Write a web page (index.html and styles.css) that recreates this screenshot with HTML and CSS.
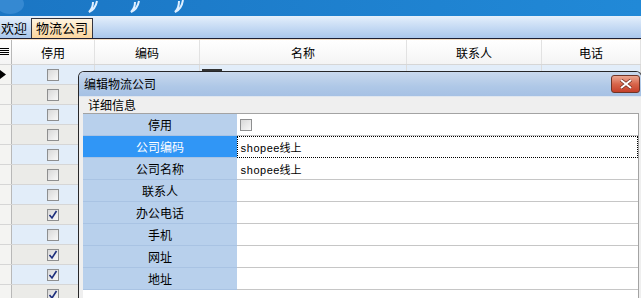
FILE: index.html
```html
<!DOCTYPE html>
<html lang="zh-CN">
<head>
    <meta charset="UTF-8">
    <title>物流公司</title>
    <link rel="stylesheet" href="styles.css">
</head>
<body>
    <!-- Banner -->
    <div class="banner">
        <svg class="banner-art" width="641" height="16" viewBox="0 0 641 16">
            <ellipse cx="10" cy="4" rx="14" ry="10" fill="#4f9be0" opacity="0.5"/>
            <path d="M97 1 C96 6 94 10 89 12 C92 9 93 6 93 2" fill="none" stroke="#dfefff" stroke-width="2"/>
            <path d="M139 1 C138 6 136 10 131 12 C134 9 135 6 135 2" fill="none" stroke="#dfefff" stroke-width="2"/>
            <path d="M183 0 C182 6 180 10 175 12 C178 9 179 6 179 1" fill="none" stroke="#dfefff" stroke-width="2"/>
        </svg>
    </div>

    <!-- Tabs -->
    <div class="tabs">
        <span class="tab">欢迎</span>
        <span class="tab active">物流公司</span>
    </div>

    <!-- Grid -->
    <div class="grid">
        <div class="grid-row grid-head">
            <div class="cell rh">
                <svg width="9" height="8" viewBox="0 0 9 8"><rect y="0" width="9" height="1"/><rect y="2" width="9" height="1"/><rect y="4" width="9" height="1"/><rect y="6" width="9" height="1"/></svg>
            </div>
            <div class="cell">停用</div>
            <div class="cell">编码</div>
            <div class="cell">名称</div>
            <div class="cell">联系人</div>
            <div class="cell">电话</div>
        </div>

        <div class="grid-row even">
            <div class="cell rh"><svg width="6" height="9" viewBox="0 0 6 9"><path d="M0 0 L6 4.5 L0 9 Z"/></svg></div>
            <div class="cell"><span class="chk"></span></div>
            <div class="cell"></div>
            <div class="cell left"><span class="cut"></span></div>
            <div class="cell"></div>
            <div class="cell"></div>
        </div>
        <div class="grid-row odd">
            <div class="cell rh"></div><div class="cell"><span class="chk"></span></div>
            <div class="cell"></div><div class="cell"></div><div class="cell"></div><div class="cell"></div>
        </div>
        <div class="grid-row even">
            <div class="cell rh"></div><div class="cell"><span class="chk"></span></div>
            <div class="cell"></div><div class="cell"></div><div class="cell"></div><div class="cell"></div>
        </div>
        <div class="grid-row odd">
            <div class="cell rh"></div><div class="cell"><span class="chk"></span></div>
            <div class="cell"></div><div class="cell"></div><div class="cell"></div><div class="cell"></div>
        </div>
        <div class="grid-row even">
            <div class="cell rh"></div><div class="cell"><span class="chk"></span></div>
            <div class="cell"></div><div class="cell"></div><div class="cell"></div><div class="cell"></div>
        </div>
        <div class="grid-row odd">
            <div class="cell rh"></div><div class="cell"><span class="chk"></span></div>
            <div class="cell"></div><div class="cell"></div><div class="cell"></div><div class="cell"></div>
        </div>
        <div class="grid-row even">
            <div class="cell rh"></div><div class="cell"><span class="chk"></span></div>
            <div class="cell"></div><div class="cell"></div><div class="cell"></div><div class="cell"></div>
        </div>
        <div class="grid-row odd">
            <div class="cell rh"></div><div class="cell"><span class="chk"><svg width="10" height="10" viewBox="0 0 10 10"><path d="M1.5 5 L4 8 L8.5 1"/></svg></span></div>
            <div class="cell"></div><div class="cell"></div><div class="cell"></div><div class="cell"></div>
        </div>
        <div class="grid-row even">
            <div class="cell rh"></div><div class="cell"><span class="chk"></span></div>
            <div class="cell"></div><div class="cell"></div><div class="cell"></div><div class="cell"></div>
        </div>
        <div class="grid-row odd">
            <div class="cell rh"></div><div class="cell"><span class="chk"><svg width="10" height="10" viewBox="0 0 10 10"><path d="M1.5 5 L4 8 L8.5 1"/></svg></span></div>
            <div class="cell"></div><div class="cell"></div><div class="cell"></div><div class="cell"></div>
        </div>
        <div class="grid-row even">
            <div class="cell rh"></div><div class="cell"><span class="chk"><svg width="10" height="10" viewBox="0 0 10 10"><path d="M1.5 5 L4 8 L8.5 1"/></svg></span></div>
            <div class="cell"></div><div class="cell"></div><div class="cell"></div><div class="cell"></div>
        </div>
        <div class="grid-row odd">
            <div class="cell rh"></div><div class="cell"><span class="chk"><svg width="10" height="10" viewBox="0 0 10 10"><path d="M1.5 5 L4 8 L8.5 1"/></svg></span></div>
            <div class="cell"></div><div class="cell"></div><div class="cell"></div><div class="cell"></div>
        </div>
    </div>

    <!-- Edit dialog -->
    <div class="dialog">
        <div class="dialog-title">
            <span>编辑物流公司</span>
            <span class="close">
                <svg width="14" height="10" viewBox="0 0 14 10"><path d="M2 1 L12 9 M12 1 L2 9" stroke="#6b2a1c" stroke-width="3.4"/><path d="M2 1 L12 9 M12 1 L2 9" stroke="#fff" stroke-width="2"/></svg>
            </span>
        </div>
        <div class="dialog-sub">详细信息</div>
        <div class="group">
            <div class="prop">
                <div class="prop-label">停用</div>
                <div class="prop-value"><span class="chk"></span></div>
            </div>
            <div class="prop selected">
                <div class="prop-label">公司编码</div>
                <div class="prop-value focus">shopee线上</div>
            </div>
            <div class="prop">
                <div class="prop-label">公司名称</div>
                <div class="prop-value">shopee线上</div>
            </div>
            <div class="prop">
                <div class="prop-label">联系人</div>
                <div class="prop-value"></div>
            </div>
            <div class="prop">
                <div class="prop-label">办公电话</div>
                <div class="prop-value"></div>
            </div>
            <div class="prop">
                <div class="prop-label">手机</div>
                <div class="prop-value"></div>
            </div>
            <div class="prop">
                <div class="prop-label">网址</div>
                <div class="prop-value"></div>
            </div>
            <div class="prop">
                <div class="prop-label">地址</div>
                <div class="prop-value"></div>
            </div>
        </div>
    </div>
</body>
</html>
```

FILE: styles.css
```css
/* Page */
body {
    margin: 0;
    width: 641px;
    height: 298px;
    overflow: hidden;
    position: relative;
    font-family: "Noto Sans CJK SC", "Liberation Sans", sans-serif;
    font-size: 12px;
    color: #000;
    background: #fff;
}

/* Top banner */
.banner {
    height: 16px;
    background: linear-gradient(to right, #1b76c4, #2189d7);
    overflow: hidden;
}

.banner-art {
    display: block;
}

/* Tab strip */
.tabs {
    height: 22px;
    display: flex;
    align-items: flex-end;
    background: linear-gradient(#e6f0fb, #d2e3f7 30%, #aac7ec);
    border-bottom: 1px solid #1d1f33;
}

.tab {
    height: 19px;
    line-height: 18px;
    font-size: 13px;
    padding: 0 3px 0 1px;
}

.tab.active {
    padding: 0 4px;
    margin-left: 1px;
    background: linear-gradient(#fff4e0, #fcd69e);
    border: 1px solid #34343f;
    border-bottom: none;
}

/* Data grid */
.grid {
    height: 259px;
    overflow: hidden;
}

.grid-row {
    display: grid;
    grid-template-columns: 12px 83px 105px 207px 135px 99px;
    height: 19px;
    border-bottom: 1px solid #d6d6d6;
}

.grid-head {
    height: 24px;
    border-top: 1px solid #f3dcc2;
    background: linear-gradient(#ffffff, #f4f4f4);
}

.cell {
    display: flex;
    align-items: center;
    justify-content: center;
    border-right: 1px solid #dcdcdc;
    overflow: hidden;
    white-space: nowrap;
}

.cell.left {
    justify-content: flex-start;
    align-items: flex-start;
    padding: 4px 0 0 2px;
}

/* top of a text hidden behind the dialog */
.cut {
    width: 20px;
    height: 2px;
    background: #333;
}

.grid-head .cell {
    border-right-color: #e2e2e2;
}

.cell.rh {
    justify-content: flex-start;
    border-right: 1px solid #b8b8b8;
}

.grid-row.even .cell {
    background: #e2edf9;
}

.grid-row.odd .cell {
    background: #ebebe8;
}

.grid-row .cell.rh {
    background: #f4f4f2;
}

.grid-head .cell.rh {
    background: transparent;
}

/* Checkbox */
.chk {
    display: inline-flex;
    align-items: center;
    justify-content: center;
    width: 12px;
    height: 12px;
    box-sizing: border-box;
    border: 1px solid #8e8f90;
    background: linear-gradient(135deg, #d8d8d8, #f8f8f8);
}

.chk svg path {
    fill: none;
    stroke: #1e2f7d;
    stroke-width: 1.6;
}

/* Dialog */
.dialog {
    position: absolute;
    left: 78px;
    top: 71px;
    width: 562px;
    height: 227px;
    border: 1px solid #262628;
    border-bottom: none;
    border-radius: 6px 6px 0 0;
    background: #efefef;
}

.dialog-title {
    position: relative;
    height: 24px;
    line-height: 24px;
    padding-left: 5px;
    border-radius: 5px 5px 0 0;
    background: linear-gradient(#c9d9ee, #afc8e7 60%, #a6c1e4);
}

.close {
    position: absolute;
    right: 1px;
    top: 3px;
    width: 29px;
    height: 18px;
    box-sizing: border-box;
    display: flex;
    align-items: center;
    justify-content: center;
    border: 1px solid #6e3426;
    border-radius: 3px;
    background: linear-gradient(#eba792, #d8664b 50%, #c5402a);
}

.dialog-sub {
    height: 16px;
    line-height: 15px;
    padding-left: 9px;
    border-top: 1px solid #dfe6ef;
}

.group {
    margin: 0 2px 0 4px;
    height: 185px;
    border-top: 1px solid #a3a3a3;
    border-right: 1px solid #a3a3a3;
    background: #fff;
}

/* Property rows */
.prop {
    display: flex;
    height: 22px;
}

.prop-label {
    width: 154px;
    display: flex;
    align-items: center;
    justify-content: center;
    background: #b8d0ec;
    border-bottom: 1px solid #a9c3e3;
    box-sizing: border-box;
}

.prop.selected .prop-label {
    background: #3096f6;
    color: #fff;
}

.prop-value {
    flex: 1;
    display: flex;
    align-items: center;
    padding-left: 3px;
    border-bottom: 1px solid #c6c6c6;
    box-sizing: border-box;
    font-family: "Liberation Mono", "Noto Sans CJK SC", monospace;
    font-size: 11px;
}

.prop-value.focus {
    border: 1px dotted #000;
    padding-left: 2px;
}
```
